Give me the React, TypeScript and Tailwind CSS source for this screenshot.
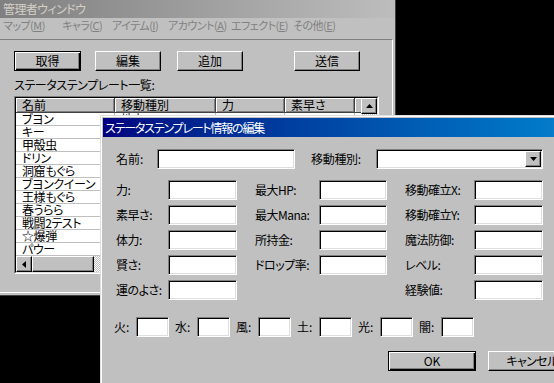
import React from 'react';

const raised =
  'bg-[#c0c0c0] border border-t-white border-l-white border-r-black border-b-black shadow-[inset_-1px_-1px_#808080]';
const defaultRaised =
  'bg-[#c0c0c0] border border-black shadow-[inset_1px_1px_#fff,inset_-1px_-1px_#000,inset_-2px_-2px_#808080]';
const sunken =
  'bg-white border border-t-[#808080] border-l-[#808080] border-r-white border-b-white shadow-[inset_1px_1px_#000,inset_-1px_-1px_#dfdfdf]';
const dither =
  'bg-[repeating-conic-gradient(#c0c0c0_0%_25%,#ffffff_0%_50%)] [background-size:2px_2px]';

const Btn: React.FC<{ label: string; def?: boolean; className?: string }> = ({ label, def, className }) => (
  <div
    className={`flex h-[20px] items-center justify-center text-[12px] leading-none text-black ${
      def ? defaultRaised : raised
    } ${className ?? ''}`}
  >
    {label}
  </div>
);

const Tri: React.FC<{ dir: 'up' | 'down' | 'left' }> = ({ dir }) => {
  const pts = dir === 'up' ? '0,4 7,4 3.5,0' : dir === 'down' ? '0,0 7,0 3.5,4' : '4,0 4,7 0,3.5';
  const w = dir === 'left' ? 4 : 7;
  const h = dir === 'left' ? 7 : 4;
  return (
    <svg width={w} height={h} viewBox={`0 0 ${w} ${h}`}>
      <polygon points={pts} fill="#000" />
    </svg>
  );
};

const menus: [string, string, string][] = [
  ['マップ(', 'M', ')'],
  ['キャラ(', 'C', ')'],
  ['アイテム(', 'I', ')'],
  ['アカウント(', 'A', ')'],
  ['エフェクト(', 'E', ')'],
  ['その他(', 'E', ')'],
];
const menuWidths = ['w-[59px]', 'w-[50px]', 'w-[56px]', 'w-[63px]', 'w-[62px]', 'w-[70px]'];

const monsters = [
  ['ブヨン', '地上', '3', '2'],
  ['キー', '飛行', '4', '6'],
  ['甲殻虫', '地上', '6', '2'],
  ['ドリン', '地上', '5', '3'],
  ['洞窟もぐら', '地中', '7', '2'],
  ['ブヨンクイーン', '地上', '12', '4'],
  ['王様もぐら', '地中', '15', '3'],
  ['春うらら', '飛行', '8', '9'],
  ['戦闘2テスト', '地上', '10', '10'],
  ['☆爆弾', '固定', '20', '1'],
  ['パウー', '地上', '9', '5'],
  ['ゴースト', '飛行', '8', '7'],
];

const cols = ['w-[99px]', 'w-[101px]', 'w-[69px]', 'w-[70px]'];
const headers = ['名前', '移動種別', '力', '素早さ'];

const statRows: (string | null)[][] = [
  ['力:', '最大HP:', '移動確立X:'],
  ['素早さ:', '最大Mana:', '移動確立Y:'],
  ['体力:', '所持金:', '魔法防御:'],
  ['賢さ:', 'ドロップ率:', 'レベル:'],
  ['運のよさ:', null, '経験値:'],
];

const elements = ['火:', '水:', '風:', '土:', '光:', '闇:'];

const MainWindow: React.FC = () => (
  <div className="absolute left-0 top-0 flex h-[296px] w-[396px] flex-col border-b border-r border-[#404040] bg-[#c0c0c0]">
    <div className="flex h-[18px] items-center bg-gradient-to-r from-[#808080] to-[#bdbdbd] pl-[3px] text-[12px] leading-none tracking-[-0.6px] text-[#d4d0c8]">
      管理者ウィンドウ
    </div>
    <div className="flex h-[21px] items-start pl-[3px] pt-[1px] text-[11px] leading-[12px] tracking-[-0.5px] text-[#808080]">
      {menus.map(([a, k, b], i) => (
        <div key={i} className={`${menuWidths[i]} shrink-0 whitespace-nowrap`}>
          {a}
          <span className="underline">{k}</span>
          {b}
        </div>
      ))}
    </div>
    <div className="mb-[2px] mr-[2px] flex flex-1 flex-col border-b border-r border-t border-b-white border-r-white border-t-[#808080]">
      <div className="ml-[14px] mt-[11px] flex">
        <Btn label="取得" def className="w-[67px]" />
        <Btn label="編集" className="ml-[14px] w-[66px]" />
        <Btn label="追加" className="ml-[16px] w-[66px]" />
        <Btn label="送信" className="ml-[51px] w-[66px]" />
      </div>
      <div className="ml-[14px] mt-[7px] h-[14px] text-[12px] leading-[14px] tracking-[-0.4px] text-black">
        ステータステンプレート一覧:
      </div>
      <div className="ml-[14px] mt-[4px] h-[178px] w-[365px] border border-b-white border-l-[#808080] border-r-white border-t-[#808080]">
        <div className="flex h-full w-full border border-b-[#dfdfdf] border-l-black border-r-[#dfdfdf] border-t-black bg-white">
          <div className="flex w-[345px] flex-col">
            <div className="flex h-[15px] shrink-0">
              {headers.map((h, i) => (
                <div
                  key={h}
                  className={`${cols[i]} flex items-center border-b border-r border-[#404040] bg-[#c0c0c0] pl-[6px] text-[12px] leading-none text-black shadow-[inset_1px_1px_#fff,inset_-1px_-1px_#808080]`}
                >
                  {h}
                </div>
              ))}
              <div className="flex-1 border-b border-[#404040] bg-[#c0c0c0] shadow-[inset_1px_1px_#fff]" />
            </div>
            <div className="flex-1 overflow-hidden">
              {monsters.map((m, r) => (
                <div key={r} className="flex h-[13px] border-b border-[#c0c0c0]">
                  {m.map((c, i) => (
                    <div
                      key={i}
                      className={`${cols[i]} overflow-hidden whitespace-nowrap border-r border-[#c0c0c0] pl-[6px] text-[12px] leading-[12px] tracking-[-0.4px] text-black`}
                    >
                      {c}
                    </div>
                  ))}
                </div>
              ))}
            </div>
            <div className="flex h-[16px] shrink-0">
              <div className={`${raised} flex w-[16px] items-center justify-center`}>
                <Tri dir="left" />
              </div>
              <div className={`${raised} w-[62px]`} />
              <div className={`flex-1 ${dither}`} />
            </div>
          </div>
          <div className="flex w-[16px] flex-col">
            <div className={`${raised} flex h-[16px] items-center justify-center`}>
              <Tri dir="up" />
            </div>
            <div className={`flex-1 ${dither}`} />
          </div>
        </div>
      </div>
    </div>
  </div>
);

const Field: React.FC<{ className?: string }> = ({ className }) => (
  <div className={`h-[20px] shrink-0 ${sunken} ${className ?? ''}`} />
);

const Dialog: React.FC = () => (
  <div className="absolute left-[100px] top-[115px] flex h-[290px] w-[490px] flex-col border-l border-t border-[#dfdfdf] bg-[#c0c0c0] shadow-[inset_1px_1px_#fff]">
    <div className="mx-[2px] mt-[2px] flex h-[19px] items-center bg-gradient-to-r from-[#000080] to-[#1084d0] pl-[2px] text-[12px] leading-none tracking-[-1.2px] text-white">
      ステータステンプレート情報の編集
    </div>

    <div className="mt-[12px] flex items-center pl-[15px] text-[12px] leading-none text-black">
      <div className="w-[41px]">名前:</div>
      <Field className="w-[138px]" />
      <div className="ml-[16px] w-[65px] whitespace-nowrap tracking-[-0.3px]">移動種別:</div>
      <div className={`flex h-[20px] w-[167px] items-center justify-end pr-[1px] ${sunken}`}>
        <div className={`${raised} flex h-[16px] w-[16px] items-center justify-center`}>
          <Tri dir="down" />
        </div>
      </div>
    </div>

    <div className="mt-[11px] grid grid-cols-[121px_132px_138px] gap-x-[18px] gap-y-[5px] pl-[15px] text-[12px] leading-none tracking-[-0.5px] text-black">
      {statRows.flatMap((row, r) =>
        row.map((label, c) => (
          <div key={`${r}-${c}`} className="flex h-[20px] items-center justify-between">
            {label && (
              <>
                <span className="whitespace-nowrap">{label}</span>
                <Field className={c === 1 ? 'w-[68px]' : 'w-[69px]'} />
              </>
            )}
          </div>
        ))
      )}
    </div>

    <div className="mt-[17px] flex gap-[6px] pl-[13px] text-[12px] leading-none text-black">
      {elements.map((e) => (
        <div key={e} className="flex items-center">
          <span className="w-[22px]">{e}</span>
          <Field className="w-[33px]" />
        </div>
      ))}
    </div>

    <div className="mt-[14px] flex gap-[12px] pl-[287px]">
      <Btn label="OK" def className="w-[88px]" />
      <Btn label="キャンセル" className="w-[88px] tracking-[-0.6px]" />
    </div>
  </div>
);

export default function App() {
  return (
    <div className="relative h-[383px] w-[554px] overflow-hidden bg-black font-['Noto_Sans_CJK_JP','Noto_Sans_CJK_SC',sans-serif] [font-feature-settings:'palt']">
      <MainWindow />
      <Dialog />
    </div>
  );
}
